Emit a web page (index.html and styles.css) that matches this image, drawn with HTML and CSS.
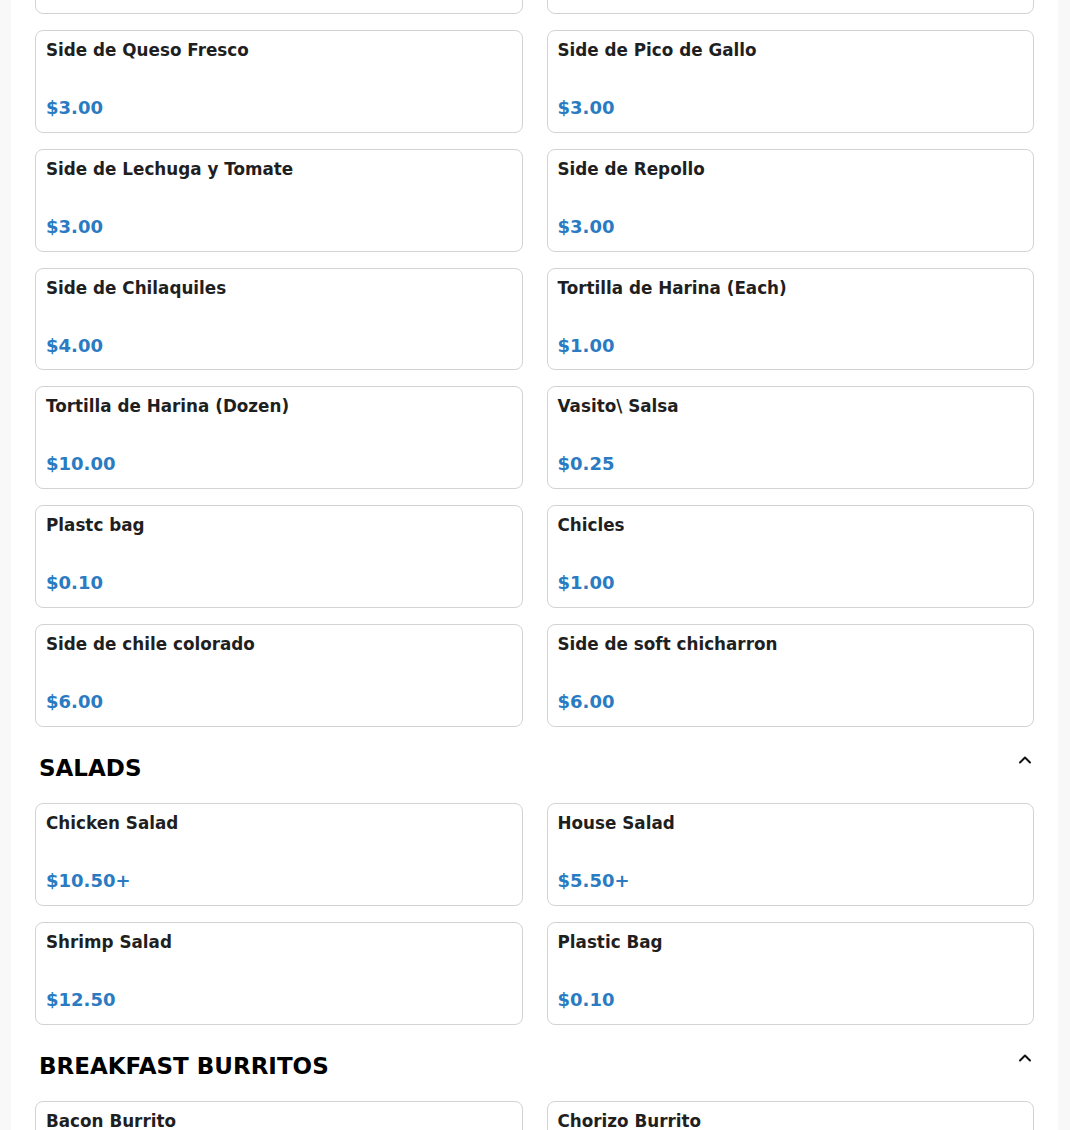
FILE: index.html
```html
<!DOCTYPE html>
<html lang="es">
<head>
<meta charset="utf-8">
<title>Menu</title>
<link rel="stylesheet" href="styles.css">
</head>
<body>
<main class="page">
  <section class="section">
    <div class="grid">
      <div class="card"><div class="name">Side de Arroz</div><div class="price">$3.00</div></div>
      <div class="card"><div class="name">Side de Frijoles</div><div class="price">$3.00</div></div>
      <div class="card"><div class="name">Side de Queso Fresco</div><div class="price">$3.00</div></div>
      <div class="card"><div class="name">Side de Pico de Gallo</div><div class="price">$3.00</div></div>
      <div class="card"><div class="name">Side de Lechuga y Tomate</div><div class="price">$3.00</div></div>
      <div class="card"><div class="name">Side de Repollo</div><div class="price">$3.00</div></div>
      <div class="card"><div class="name">Side de Chilaquiles</div><div class="price">$4.00</div></div>
      <div class="card"><div class="name">Tortilla de Harina (Each)</div><div class="price">$1.00</div></div>
      <div class="card"><div class="name">Tortilla de Harina (Dozen)</div><div class="price">$10.00</div></div>
      <div class="card"><div class="name">Vasito\ Salsa</div><div class="price">$0.25</div></div>
      <div class="card"><div class="name">Plastc bag</div><div class="price">$0.10</div></div>
      <div class="card"><div class="name">Chicles</div><div class="price">$1.00</div></div>
      <div class="card"><div class="name">Side de chile colorado</div><div class="price">$6.00</div></div>
      <div class="card"><div class="name">Side de soft chicharron</div><div class="price">$6.00</div></div>
    </div>
  </section>
  <section class="section">
    <div class="section-head">
      <h2 class="section-title">SALADS</h2>
      <svg class="chevron" width="14" height="14" viewBox="0 0 14 14" aria-hidden="true"><polyline points="2,9.5 7,4.5 12,9.5" fill="none" stroke="#111" stroke-width="2" stroke-linecap="round" stroke-linejoin="round"/></svg>
    </div>
    <div class="grid">
      <div class="card"><div class="name">Chicken Salad</div><div class="price">$10.50+</div></div>
      <div class="card"><div class="name">House Salad</div><div class="price">$5.50+</div></div>
      <div class="card"><div class="name">Shrimp Salad</div><div class="price">$12.50</div></div>
      <div class="card"><div class="name">Plastic Bag</div><div class="price">$0.10</div></div>
    </div>
  </section>
  <section class="section">
    <div class="section-head">
      <h2 class="section-title">BREAKFAST BURRITOS</h2>
      <svg class="chevron" width="14" height="14" viewBox="0 0 14 14" aria-hidden="true"><polyline points="2,9.5 7,4.5 12,9.5" fill="none" stroke="#111" stroke-width="2" stroke-linecap="round" stroke-linejoin="round"/></svg>
    </div>
    <div class="grid">
      <div class="card"><div class="name">Bacon Burrito</div><div class="price">$8.00</div></div>
      <div class="card"><div class="name">Chorizo Burrito</div><div class="price">$8.00</div></div>
    </div>
  </section>
</main>
</body>
</html>
```

FILE: styles.css
```css
html, body {
  margin: 0;
  padding: 0;
  background: #f8f8f8;
  font-family: "DejaVu Sans", "Liberation Sans", sans-serif;
}

.page {
  width: 1047px;
  margin: -88.8px 0 0 11px;
  background: #ffffff;
  padding: 0 24px 40px;
  box-sizing: border-box;
}

.section + .section {
  margin-top: 26.6px;
}

.grid {
  display: grid;
  grid-template-columns: 1fr 1fr;
  column-gap: 24px;
  row-gap: 16px;
}

.card {
  border: 1px solid #d3d3d3;
  border-radius: 8px;
  padding: 7px 10px 11.8px;
  background: #fff;
}

.name {
  font-size: 16.8px;
  font-weight: bold;
  line-height: 24px;
  color: #1f1f1f;
}

.price {
  margin-top: 34px;
  font-size: 18px;
  font-weight: bold;
  line-height: 24px;
  color: #2a7bc1;
}

.section-head {
  display: flex;
  justify-content: space-between;
  align-items: flex-start;
  padding: 0 2px 0 4px;
  margin-bottom: 19.6px;
}

.section-title {
  margin: 0;
  font-size: 23px;
  font-weight: bold;
  line-height: 30px;
  color: #000;
}

.chevron {
  margin-top: 0;
  display: block;
}
```
